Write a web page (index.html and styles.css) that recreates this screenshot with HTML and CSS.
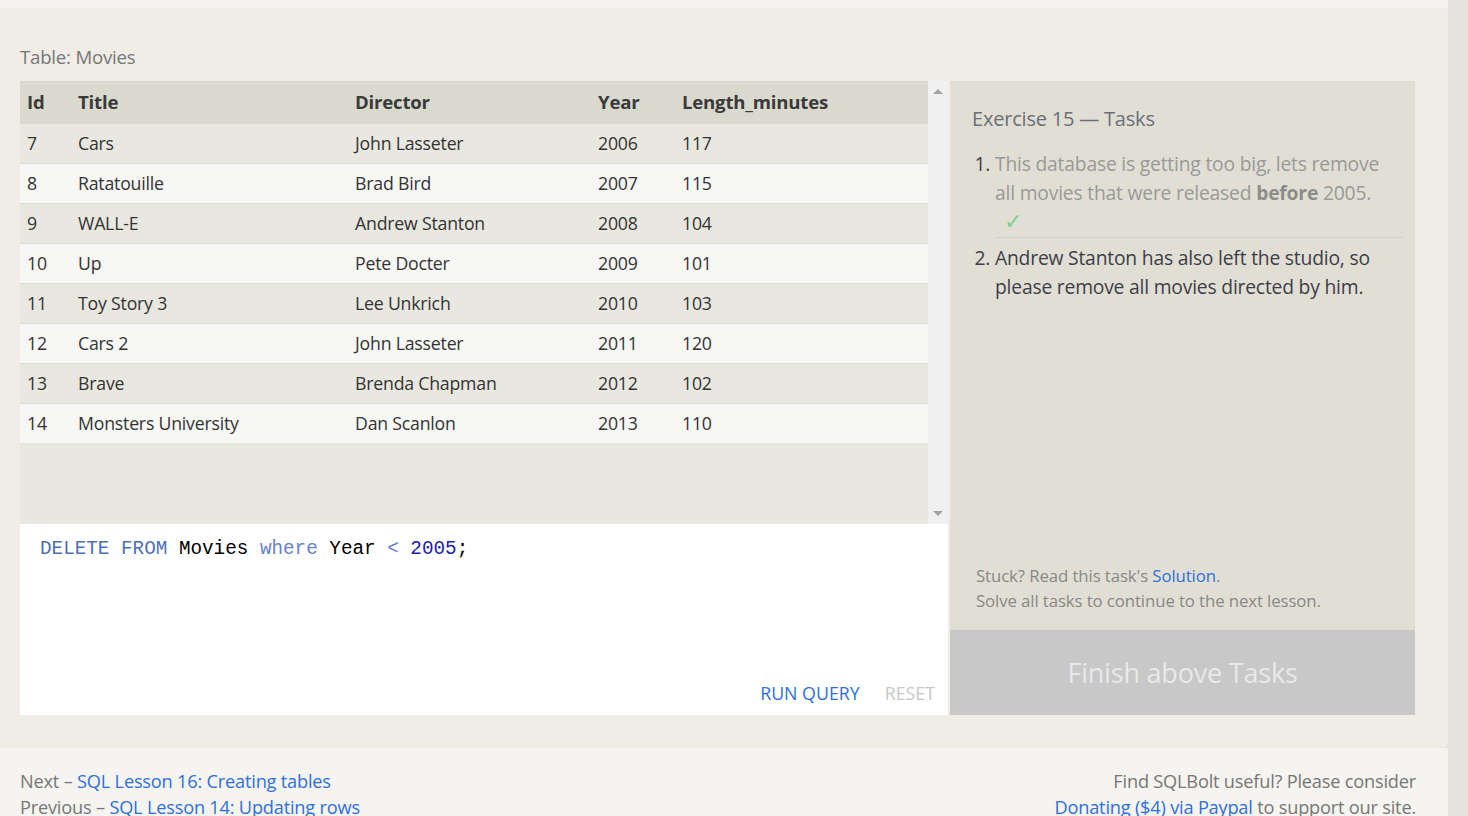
FILE: index.html
```html
<!DOCTYPE html>
<html>
<head>
<meta charset="utf-8">
<link rel="stylesheet" href="styles.css">
</head>
<body>
<div class="topstrip"></div>
<div class="page">
  <section class="main">
    <div class="table-label">Table: Movies</div>
    <div class="exercise">
      <div class="left">
        <div class="results">
          <div class="table-wrap">
            <table class="movies">
              <thead>
                <tr><th class="c-id">Id</th><th class="c-title">Title</th><th class="c-dir">Director</th><th class="c-year">Year</th><th class="c-len">Length_minutes</th></tr>
              </thead>
              <tbody>
                <tr><td>7</td><td>Cars</td><td>John Lasseter</td><td>2006</td><td>117</td></tr>
                <tr><td>8</td><td>Ratatouille</td><td>Brad Bird</td><td>2007</td><td>115</td></tr>
                <tr><td>9</td><td>WALL-E</td><td>Andrew Stanton</td><td>2008</td><td>104</td></tr>
                <tr><td>10</td><td>Up</td><td>Pete Docter</td><td>2009</td><td>101</td></tr>
                <tr><td>11</td><td>Toy Story 3</td><td>Lee Unkrich</td><td>2010</td><td>103</td></tr>
                <tr><td>12</td><td>Cars 2</td><td>John Lasseter</td><td>2011</td><td>120</td></tr>
                <tr><td>13</td><td>Brave</td><td>Brenda Chapman</td><td>2012</td><td>102</td></tr>
                <tr><td>14</td><td>Monsters University</td><td>Dan Scanlon</td><td>2013</td><td>110</td></tr>
              </tbody>
            </table>
          </div>
          <div class="scrollbar">
            <span class="arrow up"></span>
            <span class="arrow down"></span>
          </div>
        </div>
        <div class="editor">
          <div class="code"><span class="kw">DELETE</span> <span class="kw">FROM</span> Movies <span class="kw2">where</span> Year <span class="kw2">&lt;</span> <span class="num">2005</span>;</div>
          <div class="editor-actions">
            <span class="run">RUN QUERY</span>
            <span class="reset">RESET</span>
          </div>
        </div>
      </div>
      <aside class="tasks">
        <div class="tasks-body">
          <h3 class="tasks-title">Exercise 15 — Tasks</h3>
          <ol class="task-list">
            <li class="done"><span class="task-text">This database is getting too big, lets remove all movies that were released <b>before</b> 2005.</span><span class="check">✓</span></li>
            <li><span class="task-text">Andrew Stanton has also left the studio, so please remove all movies directed by him.</span></li>
          </ol>
          <div class="stuck">
            <div>Stuck? Read this task's <a class="link">Solution</a>.</div>
            <div>Solve all tasks to continue to the next lesson.</div>
          </div>
        </div>
        <div class="finish">Finish above Tasks</div>
      </aside>
    </div>
  </section>
  <footer class="footer">
    <div class="nav">
      <div>Next – <a class="link">SQL Lesson 16: Creating tables</a></div>
      <div>Previous – <a class="link">SQL Lesson 14: Updating rows</a></div>
    </div>
    <div class="donate">
      <div>Find SQLBolt useful? Please consider</div>
      <div><a class="link">Donating ($4) via Paypal</a> to support our site.</div>
    </div>
  </footer>
</div>
</body>
</html>
```

FILE: styles.css
```css
* { box-sizing: border-box; }
html, body { margin: 0; padding: 0; }
body {
  background: #e6e3df;
  font-family: "Open Sans", "Noto Sans", sans-serif;
  width: 1468px;
  height: 816px;
  overflow: hidden;
}
.topstrip {
  width: 1448px;
  height: 8px;
  background: #f5f4f0;
}
.page {
  width: 1448px;
}
.main {
  background: #efede6;
  height: 740px;
  padding: 37px 33px 0 20px;
  border-bottom-right-radius: 6px;
}
.table-label {
  font-size: 18.6px;
  color: #777;
  line-height: 24px;
  height: 36px;
  letter-spacing: -0.2px;
}
.exercise {
  display: flex;
  gap: 2px;
  height: 634px;
}
.left {
  width: 928px;
  display: flex;
  flex-direction: column;
}
.results {
  height: 443px;
  display: flex;
  background: #e9e8e0;
}
.table-wrap {
  width: 908px;
}
.movies {
  width: 100%;
  border-collapse: collapse;
  font-size: 17.7px;
  color: #333;
  letter-spacing: -0.2px;
}
.movies th {
  background: #d9d9cd;
  text-align: left;
  font-weight: 700;
  font-size: 18.6px;
  height: 42px;
  padding: 0 0 0 7px;
  color: #3a3a3a;
}
.movies td {
  height: 40px;
  padding: 0 0 0 7px;
  border-top: 1px solid #dcdcd4;
}
.movies tbody tr:nth-child(odd) td { background: #e9e8e0; }
.movies tbody tr:nth-child(even) td { background: #f7f7f5; }
.c-id { width: 51px; }
.c-title { width: 277px; }
.c-dir { width: 243px; }
.c-year { width: 84px; }
.scrollbar {
  width: 20px;
  background: #f0f0f0;
  display: flex;
  flex-direction: column;
  justify-content: space-between;
  align-items: center;
  padding: 8px 0 8px;
}
.arrow {
  width: 0; height: 0;
  border-left: 5px solid transparent;
  border-right: 5px solid transparent;
}
.arrow.up { border-bottom: 5px solid #a3a3a3; }
.arrow.down { border-top: 5px solid #a3a3a3; }
.editor {
  flex: 1;
  background: #fff;
  display: flex;
  flex-direction: column;
  justify-content: space-between;
  padding: 13px 13px 11px 20px;
}
.code {
  font-family: "Liberation Mono", monospace;
  font-size: 19.3px;
  line-height: 24px;
  color: #000;
}
.kw { color: #4e6fb5; }
.kw2 { color: #6a80cc; }
.num { color: #1c1cb0; }
.editor-actions {
  display: flex;
  justify-content: flex-end;
  gap: 25px;
  font-size: 17.8px;
  line-height: 22px;
}
.run { color: #2f6fdc; }
.reset { color: #c8c8c8; }
.tasks {
  width: 465px;
  background: #e1dfd4;
  display: flex;
  flex-direction: column;
}
.tasks-body {
  flex: 1;
  padding: 24px 12px 0 22px;
  display: flex;
  flex-direction: column;
}
.tasks-title {
  margin: 0;
  font-weight: 400;
  font-size: 20px;
  line-height: 28px;
  color: #6b6e7c;
  letter-spacing: -0.2px;
}
.task-list {
  margin: 17px 0 0;
  padding: 0 8px 0 23px;
  font-size: 19.3px;
  line-height: 28.5px;
  color: #3d3d4a;
  letter-spacing: -0.2px;
}
.task-list li { padding-left: 0; }
.task-list li.done {
  border-bottom: 1px solid #d4d2c7;
  padding-bottom: 4px;
  margin-bottom: 6px;
  margin-right: -8px;
}
.task-list li.done .task-text { color: #999; display: block; padding-right: 8px; }
.task-list b { color: #8c8c8c; }
.check {
  display: block;
  color: #7fcf8d;
  font-size: 22px;
  line-height: 26px;
  padding-left: 9px;
}
.stuck {
  margin-top: auto;
  padding: 0 0 17px 4px;
  font-size: 16.8px;
  line-height: 25px;
  color: #888;
  letter-spacing: -0.1px;
}
.link { color: #2f6fdc; text-decoration: none; }
.finish {
  height: 85px;
  background: #c8c8c8;
  color: #e9e9e9;
  font-size: 27px;
  display: flex;
  align-items: center;
  justify-content: center;
  letter-spacing: -0.2px;
}
.footer {
  background: #f5f4f0;
  display: flex;
  justify-content: space-between;
  padding: 20px 32px 0 20px;
  font-size: 18.2px;
  line-height: 26px;
  color: #777;
  height: 68px;
  letter-spacing: -0.2px;
}
.donate { text-align: right; }
```
